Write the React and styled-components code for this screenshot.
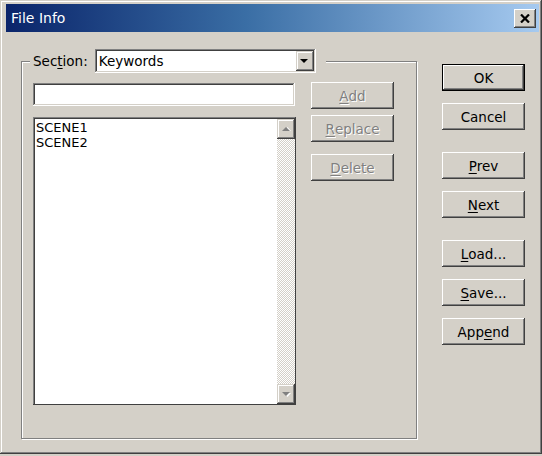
import React from 'react';
import styled, { createGlobalStyle } from 'styled-components';

const GlobalStyle = createGlobalStyle`
  html, body {
    margin: 0;
    padding: 0;
    background: #d4d0c8;
  }
  body {
    font-family: "DejaVu Sans", "Liberation Sans", sans-serif;
    font-size: 13.5px;
    color: #000;
  }
`;

const Window = styled.div`
  box-sizing: border-box;
  width: 542px;
  height: 454px;
  padding: 4px 3px 4px 6px;
  background: #d4d0c8;
  box-shadow: inset -1px -1px #404040, inset 1px 1px #d4d0c8,
    inset -2px -2px #808080, inset 2px 2px #fff;
  display: flex;
  flex-direction: column;
`;

const TitleBar = styled.div`
  height: 28px;
  display: flex;
  align-items: center;
  justify-content: space-between;
  padding: 0 3px 0 5px;
  background: linear-gradient(to right, #0a246a 0%, #3a6ea5 45%, #a6caf0 100%);
  color: #fff;
`;

const Title = styled.span`
  font-size: 14px;
`;

const CloseButton = styled.div`
  width: 22px;
  height: 19px;
  display: flex;
  align-items: center;
  justify-content: center;
  background: #d4d0c8;
  box-shadow: inset -1px -1px #404040, inset 1px 1px #fff,
    inset -2px -2px #808080, inset 2px 2px #d4d0c8;
`;

const Body = styled.div`
  flex: 1;
  display: flex;
  padding: 29px 12px 0 15px;
  gap: 25px;
`;

const GroupBox = styled.div`
  box-sizing: border-box;
  width: 396px;
  height: 378px;
  border: 1px solid #808080;
  box-shadow: inset 1px 1px #fff, 1px 1px #fff;
  display: flex;
  flex-direction: column;
`;

const GroupHeader = styled.div`
  align-self: flex-start;
  display: flex;
  align-items: center;
  gap: 7px;
  margin: -13px 0 0 8px;
  padding: 0 10px 0 3px;
  background: #d4d0c8;
`;

const Label = styled.span``;

const Select = styled.div`
  box-sizing: border-box;
  width: 221px;
  height: 24px;
  display: flex;
  align-items: center;
  justify-content: space-between;
  padding: 2px;
  background: #fff;
  box-shadow: inset -1px -1px #fff, inset 1px 1px #808080,
    inset -2px -2px #d4d0c8, inset 2px 2px #404040;
`;

const SelectValue = styled.span`
  padding-left: 2px;
`;

const ArrowButton = styled.div`
  width: ${p => p.$w || 18}px;
  height: ${p => p.$h || 20}px;
  flex-shrink: 0;
  display: flex;
  align-items: center;
  justify-content: center;
  background: #d4d0c8;
  box-shadow: inset -1px -1px #404040, inset 1px 1px #d4d0c8,
    inset -2px -2px #808080, inset 2px 2px #fff;
`;

const GroupContent = styled.div`
  display: flex;
  gap: 15px;
  padding: 10px 0 0 11px;
`;

const FieldColumn = styled.div`
  display: flex;
  flex-direction: column;
  gap: 11px;
`;

const TextField = styled.div`
  box-sizing: border-box;
  width: 262px;
  height: 23px;
  background: #fff;
  box-shadow: inset -1px -1px #fff, inset 1px 1px #808080,
    inset -2px -2px #d4d0c8, inset 2px 2px #404040;
`;

const ListBox = styled.div`
  box-sizing: border-box;
  width: 263px;
  height: 288px;
  display: flex;
  padding: 2px 1px 1px 2px;
  background: #fff;
  box-shadow: inset -1px -1px #404040, inset 1px 1px #808080,
    inset 2px 2px #404040;
`;

const ListItems = styled.div`
  flex: 1;
  padding: 1px;
  font-size: 13px;
  line-height: 15px;
`;

const ScrollBar = styled.div`
  width: 18px;
  display: flex;
  flex-direction: column;
  justify-content: space-between;
  background: repeating-conic-gradient(#d4d0c8 0 25%, #fff 0 50%) 0 0 / 2px 2px;
`;

const SideButtons = styled.div`
  display: flex;
  flex-direction: column;
  margin-top: -1px;
`;

const Button = styled.div`
  box-sizing: border-box;
  width: 83px;
  height: 27px;
  margin-top: ${p => p.$gap || 0}px;
  display: flex;
  align-items: center;
  justify-content: center;
  background: #d4d0c8;
  color: ${p => (p.$disabled ? '#808080' : '#000')};
  text-shadow: ${p => (p.$disabled ? '1px 1px 0 #fff' : 'none')};
  box-shadow: ${p =>
    p.$default
      ? 'inset 0 0 0 1px #000, inset -2px -2px #404040, inset 2px 2px #fff, inset -3px -3px #808080'
      : 'inset -1px -1px #404040, inset 1px 1px #fff, inset -2px -2px #808080, inset 2px 2px #d4d0c8'};
`;

const ButtonColumn = styled.div`
  display: flex;
  flex-direction: column;
  padding-top: 3px;
`;

const Key = styled.u`
  text-underline-offset: 2px;
`;

const Triangle = ({ down = true, color = '#000', shadow }) => (
  <svg width="9" height="6" viewBox="0 0 9 6">
    {shadow && (
      <polygon
        points={down ? '2,2 9,2 5.5,6' : '2,5 9,5 5.5,1'}
        fill="#fff"
      />
    )}
    <polygon points={down ? '0,1 8,1 4,5' : '0,5 8,5 4,1'} fill={color} />
  </svg>
);

const CloseIcon = () => (
  <svg width="10" height="9" viewBox="0 0 10 9">
    <path d="M1 0.5 L9 8.5 M9 0.5 L1 8.5" stroke="#000" strokeWidth="2.2" />
  </svg>
);

const App = () => {
  return (
    <>
      <GlobalStyle />
      <Window>
        <TitleBar>
          <Title>File Info</Title>
          <CloseButton>
            <CloseIcon />
          </CloseButton>
        </TitleBar>
        <Body>
          <GroupBox>
            <GroupHeader>
              <Label>
                Sec<Key>t</Key>ion:
              </Label>
              <Select>
                <SelectValue>Keywords</SelectValue>
                <ArrowButton $w={18} $h={20}>
                  <Triangle />
                </ArrowButton>
              </Select>
            </GroupHeader>
            <GroupContent>
              <FieldColumn>
                <TextField />
                <ListBox>
                  <ListItems>
                    <div>SCENE1</div>
                    <div>SCENE2</div>
                  </ListItems>
                  <ScrollBar>
                    <ArrowButton $w={18} $h={20}>
                      <Triangle down={false} color="#808080" shadow />
                    </ArrowButton>
                    <ArrowButton $w={18} $h={20}>
                      <Triangle color="#808080" shadow />
                    </ArrowButton>
                  </ScrollBar>
                </ListBox>
              </FieldColumn>
              <SideButtons>
                <Button $disabled>
                  <Key>A</Key>dd
                </Button>
                <Button $disabled $gap={6}>
                  <Key>R</Key>eplace
                </Button>
                <Button $disabled $gap={12}>
                  <Key>D</Key>elete
                </Button>
              </SideButtons>
            </GroupContent>
          </GroupBox>
          <ButtonColumn>
            <Button $default>OK</Button>
            <Button $gap={12}>Cancel</Button>
            <Button $gap={22}>
              <Key>P</Key>rev
            </Button>
            <Button $gap={12}>
              <Key>N</Key>ext
            </Button>
            <Button $gap={22}>
              <Key>L</Key>oad...
            </Button>
            <Button $gap={12}>
              <Key>S</Key>ave...
            </Button>
            <Button $gap={12}>
              App<Key>e</Key>nd
            </Button>
          </ButtonColumn>
        </Body>
      </Window>
    </>
  );
};

export default App;
